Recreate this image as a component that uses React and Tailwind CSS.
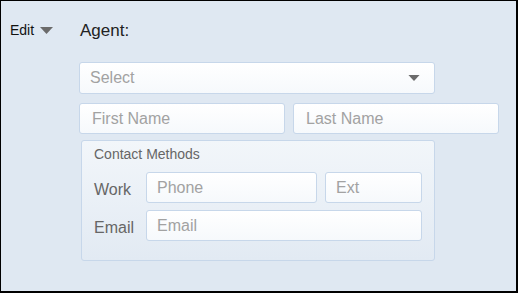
import React from 'react';

const Field = ({ placeholder, className = '' }) => (
    <div
        className={`flex items-center rounded-[3px] border border-[#c7d7ea] bg-gradient-to-b from-[#ffffff] to-[#f6f9fc] pl-[10px] text-[16px] text-[#a2a2a2] ${className}`}
    >
        {placeholder}
    </div>
);

const Caret = ({ className = '' }) => (
    <svg className={className} width="13" height="7" viewBox="0 0 13 7">
        <polygon points="0,0 13,0 6.5,7" fill="#6b6b6b" />
    </svg>
);

const App = () => {
    return (
        <div
            className="flex w-[518px] h-[293px] border-l border-t border-r-2 border-b-2 border-black bg-[#dfe8f2]"
            style={{ fontFamily: '"Liberation Sans", Arial, sans-serif' }}
        >
            {/* edit menu */}
            <div className="w-[78px] shrink-0 pl-[9px] pt-[21px]">
                <div className="flex items-center gap-[6px] text-[14px] leading-[16px] text-[#111]">
                    <span>Edit</span>
                    <Caret />
                </div>
            </div>

            {/* agent form */}
            <div className="flex flex-col w-[420px] pt-[20px]">
                <div className="pl-[1px] text-[17px] leading-[20px] text-[#222]">Agent:</div>

                <div className="mt-[21px] flex items-center justify-between w-[356px] h-[32px] rounded-[3px] border border-[#c7d7ea] bg-gradient-to-b from-[#ffffff] to-[#f6f9fc] pl-[10px] pr-[14px] text-[16px] text-[#a2a2a2]">
                    <span>Select</span>
                    <Caret className="w-[12px] h-[6px]" />
                </div>

                <div className="mt-[9px] flex gap-[8px]">
                    <Field placeholder="First Name" className="w-[206px] h-[31px] pl-[12px]" />
                    <Field placeholder="Last Name" className="w-[206px] h-[31px] pl-[12px]" />
                </div>

                <div className="mt-[6px] ml-[2px] w-[354px] h-[121px] rounded-[3px] border border-[#c7d7ea] bg-gradient-to-b from-[#f2f6fa] to-[#e2eaf3] pl-[12px] pt-[5px]">
                    <div className="text-[14px] leading-[17px] text-[#666]">Contact Methods</div>
                    <div className="mt-[9px] flex items-center">
                        <span className="w-[52px] pt-[4px] text-[16px] text-[#666]">Work</span>
                        <Field placeholder="Phone" className="w-[171px] h-[31px]" />
                        <Field placeholder="Ext" className="ml-[8px] w-[97px] h-[31px]" />
                    </div>
                    <div className="mt-[7px] flex items-center">
                        <span className="w-[52px] pt-[4px] text-[16px] text-[#666]">Email</span>
                        <Field placeholder="Email" className="w-[276px] h-[31px]" />
                    </div>
                </div>
            </div>
        </div>
    );
};

export default App;
